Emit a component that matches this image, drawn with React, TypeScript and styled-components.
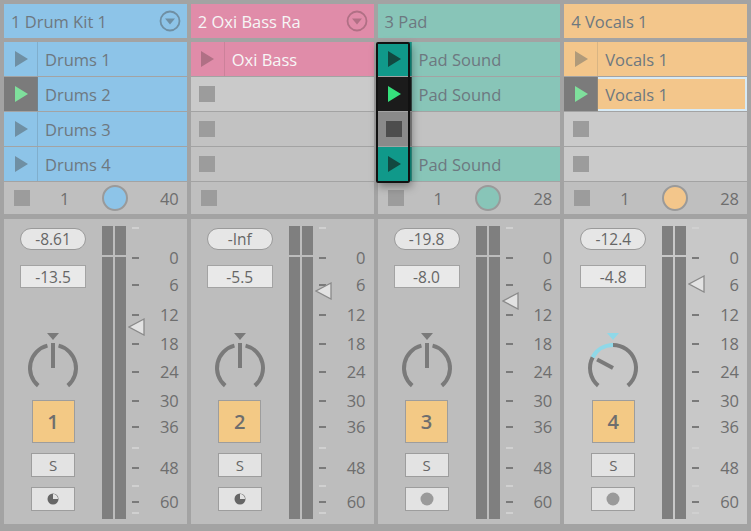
import React from 'react';
import styled, { createGlobalStyle } from 'styled-components';

const GlobalStyle = createGlobalStyle`
  body { margin: 0; background: #a3a3a3; font-family: 'Open Sans', 'Liberation Sans', sans-serif; }
`;

type Clip = { name?: string; play?: 'idle' | 'playing' | 'launch' | 'stop' | 'launchPlay'; selected?: boolean; filled: boolean };

interface Track {
  name: string;
  color: string;
  dark: string;
  arrow: boolean;
  clips: Clip[];
  footer: boolean;
  pill: string;
  vol: string;
  fader: number;
  num: string;
  knob: number;
  bottomDot: 'clock' | 'dot';
  light?: boolean;
}

const tracks: Track[] = [
  {
    name: '1 Drum Kit 1', color: '#8dc4e8', dark: '#6f8fa3', arrow: true, footer: true,
    clips: [
      { name: 'Drums 1', filled: true, play: 'idle' },
      { name: 'Drums 2', filled: true, play: 'playing' },
      { name: 'Drums 3', filled: true, play: 'idle' },
      { name: 'Drums 4', filled: true, play: 'idle' },
    ],
    pill: '-8.61', vol: '-13.5', fader: 101, num: '1', knob: 0, bottomDot: 'clock',
  },
  {
    name: '2 Oxi Bass Ra', color: '#e08ca9', dark: '#b07085', arrow: true, footer: false,
    clips: [
      { name: 'Oxi Bass', filled: true, play: 'idle' },
      { filled: false }, { filled: false }, { filled: false },
    ],
    pill: '-Inf', vol: '-5.5', fader: 65, num: '2', knob: 0, bottomDot: 'clock',
  },
  {
    name: '3 Pad', color: '#88c5b8', dark: '#6a9a90', arrow: false, footer: true,
    clips: [
      { name: 'Pad Sound', filled: true, play: 'launch' },
      { name: 'Pad Sound', filled: true, play: 'launchPlay' },
      { filled: false, play: 'stop' },
      { name: 'Pad Sound', filled: true, play: 'launch' },
    ],
    pill: '-19.8', vol: '-8.0', fader: 75, num: '3', knob: 0, bottomDot: 'dot',
  },
  {
    name: '4 Vocals 1', color: '#f3c68b', dark: '#b09a7a', arrow: false, footer: true, light: true,
    clips: [
      { name: 'Vocals 1', filled: true, play: 'idle' },
      { name: 'Vocals 1', filled: true, play: 'playing', selected: true },
      { filled: false }, { filled: false },
    ],
    pill: '-12.4', vol: '-4.8', fader: 58, num: '4', knob: -62, bottomDot: 'dot',
  },
];

const Page = styled.div`
  width: 751px;
  height: 531px;
  box-sizing: border-box;
  padding: 4px 4px 7px;
  display: grid;
  grid-template-columns: repeat(4, 1fr);
  column-gap: 4px;
  color: #6e6e6e;
`;

const Column = styled.div`
  display: flex;
  flex-direction: column;
  min-width: 0;
`;

const Header = styled.div<{ $bg: string }>`
  height: 34px;
  background: ${p => p.$bg};
  display: flex;
  align-items: center;
  justify-content: space-between;
  padding: 0 6px 0 7px;
  font-size: 16.5px;
  color: ${p => (p.$bg === '#e08ca9' ? '#f6f6f6' : '#6d7880')};
  margin-bottom: 4px;
  box-sizing: border-box;
  white-space: nowrap;
`;

const Clips = styled.div`
  display: flex;
  flex-direction: column;
  gap: 1px;
  margin-bottom: 1px;
`;

const ClipRow = styled.div<{ $bg: string; $sel?: boolean }>`
  height: 34px;
  display: flex;
  background: ${p => p.$bg};
  box-sizing: border-box;
  position: relative;
  ${p => (p.$sel ? 'box-shadow: inset 0 0 0 2px #d7eaf5;' : '')}
`;

const PlayCell = styled.div<{ $bg: string; $line: string }>`
  width: 33px;
  flex-shrink: 0;
  display: flex;
  align-items: center;
  justify-content: center;
  background: ${p => p.$bg};
  border-right: 1px solid ${p => p.$line};
  position: relative;
  z-index: 1;
`;

const ClipName = styled.div<{ $light: boolean }>`
  padding-left: 7px;
  display: flex;
  align-items: center;
  font-size: 16.5px;
  color: ${p => (p.$light ? '#f7f7f7' : '#6d7880')};
  white-space: nowrap;
`;

const LaunchFrame = styled.div`
  position: absolute;
  left: -2px;
  top: 0;
  width: 34px;
  height: 141px;
  border: 2px solid #111;
  border-radius: 2px;
  box-shadow: 2px 4px 8px rgba(0, 0, 0, 0.35);
  pointer-events: none;
  z-index: 2;
  box-sizing: border-box;
`;

const StopSquare = styled.div<{ $c?: string }>`
  width: 16px;
  height: 16px;
  background: ${p => p.$c || '#9c9c9c'};
`;

const Footer = styled.div`
  height: 32px;
  background: #bfbfbf;
  display: flex;
  align-items: center;
  padding: 0 8px 0 10px;
  font-size: 16.5px;
  color: #6e6e6e;
  margin-bottom: 5px;
`;

const FooterNums = styled.div`
  flex: 1;
  display: flex;
  align-items: center;
  justify-content: space-between;
  padding-left: 30px;
`;

const Dot = styled.div<{ $c: string }>`
  width: 22px;
  height: 22px;
  border-radius: 50%;
  background: ${p => p.$c};
  border: 2px solid #9a9a9a;
`;

const Mixer = styled.div<{ $light?: boolean }>`
  flex: 1;
  background: ${p => (p.$light ? '#c8c8c8' : '#bdbdbd')};
  display: grid;
  grid-template-columns: 98px 24px 1fr;
  padding: 7px 8px 5px 0;
`;

const Controls = styled.div`
  display: flex;
  flex-direction: column;
  align-items: center;
  padding-top: 2px;
`;

const Pill = styled.div`
  width: 64px;
  height: 20px;
  border: 1.5px solid #9a9a9a;
  border-radius: 11px;
  background: #e6e6e6;
  font-size: 15.5px;
  display: flex;
  align-items: center;
  justify-content: center;
  color: #666;
`;

const VolBox = styled.div`
  margin-top: 15px;
  width: 66px;
  height: 23px;
  border: 1.5px solid #a3a3a3;
  background: #e9e9e9;
  font-size: 15.5px;
  display: flex;
  align-items: center;
  justify-content: center;
  color: #666;
  box-sizing: border-box;
`;

const KnobWrap = styled.div`
  margin-top: 44px;
  width: 58px;
  height: 60px;
`;

const TrackNum = styled.div`
  margin-top: 8px;
  width: 41px;
  height: 41px;
  background: #f3c985;
  border: 1.5px solid #9d9d9d;
  display: flex;
  align-items: center;
  justify-content: center;
  font-size: 20px;
  font-weight: 600;
  color: #6e6e6e;
`;

const SmallBtn = styled.div`
  margin-top: 10px;
  width: 42px;
  height: 22px;
  border: 1.5px solid #9d9d9d;
  background: #e3e3e3;
  display: flex;
  align-items: center;
  justify-content: center;
  font-size: 15px;
  color: #666;
`;

const Meter = styled.div`
  display: grid;
  grid-template-columns: 1fr 1fr;
  column-gap: 2px;
  grid-template-rows: 29px 1fr;
  row-gap: 2px;
`;

const MeterSeg = styled.div`
  background: #7f7f7f;
`;

const Scale = styled.div`
  position: relative;
`;

const Tick = styled.div<{ $y: number; $minor?: boolean }>`
  position: absolute;
  left: 6px;
  top: ${p => p.$y}px;
  width: 7px;
  height: 1.5px;
  background: ${p => (p.$minor ? '#d0d0d0' : '#7a7a7a')};
`;

const Label = styled.div<{ $y: number }>`
  position: absolute;
  right: 0;
  top: ${p => p.$y - 11}px;
  font-size: 16.5px;
  color: #6e6e6e;
`;

const FaderArrow = styled.svg<{ $y: number }>`
  position: absolute;
  left: 2px;
  top: ${p => p.$y - 9}px;
`;

const marks = [
  { l: '0', y: 31 }, { l: '6', y: 58 }, { l: '12', y: 88 }, { l: '18', y: 117 },
  { l: '24', y: 145 }, { l: '30', y: 174 }, { l: '36', y: 200 }, { l: '48', y: 241 }, { l: '60', y: 275 },
];
const minors = [1, 221, 259, 286];

const Triangle = ({ c }: { c: string }) => (
  <svg width="14" height="16" viewBox="0 0 14 16"><path d="M1 0 L14 8 L1 16 Z" fill={c} /></svg>
);

const Knob = ({ angle }: { angle: number }) => {
  const cx = 29, cy = 36, r = 23;
  const pt = (deg: number, rad = r) => {
    const a = ((deg - 90) * Math.PI) / 180;
    return [cx + rad * Math.cos(a), cy + rad * Math.sin(a)];
  };
  const [sx, sy] = pt(-140);
  const [ex, ey] = pt(140);
  const [gx1, gy1] = pt(-14);
  const [gx2, gy2] = pt(14);
  const [lx, ly] = pt(angle, 18);
  const [ax, ay] = pt(angle);
  const active = angle !== 0;
  return (
    <svg width="58" height="60" viewBox="0 0 58 60">
      <path d="M23 1 L35 1 L29 8 Z" fill={active ? '#8fd8e8' : '#7a7a7a'} />
      <path d={`M${sx} ${sy} A${r} ${r} 0 0 1 ${active ? ax : gx1} ${active ? ay : gy1}`} fill="none" stroke="#7a7a7a" strokeWidth="4" />
      {active && <path d={`M${ax} ${ay} A${r} ${r} 0 0 1 ${cx} ${cy - r}`} fill="none" stroke="#8fd8e8" strokeWidth="4" />}
      <path d={`M${active ? cx : gx2} ${active ? cy - r : gy2} A${r} ${r} 0 0 1 ${ex} ${ey}`} fill="none" stroke="#7a7a7a" strokeWidth="4" />
      <line x1={cx} y1={cy} x2={active ? lx : cx} y2={active ? ly : cy - 25} stroke="#7a7a7a" strokeWidth="4" />
    </svg>
  );
};

const playCellFor = (t: Track, c: Clip) => {
  switch (c.play) {
    case 'playing': return { bg: '#7b7b7b', icon: <Triangle c="#7fe09c" /> };
    case 'launch': return { bg: '#10998a', icon: <Triangle c="#124840" /> };
    case 'launchPlay': return { bg: '#1b1b1b', icon: <Triangle c="#35e07c" /> };
    case 'stop': return { bg: '#8a8a8a', icon: <StopSquare $c="#4d4d4d" /> };
    case 'idle': return { bg: t.color, icon: <Triangle c={t.dark} /> };
    default: return null;
  }
};

const App: React.FC = () => (
  <>
    <GlobalStyle />
    <Page>
      {tracks.map((t, ti) => (
        <Column key={t.name}>
          <Header $bg={t.color}>
            <span>{t.name}</span>
            {t.arrow && (
              <svg width="22" height="22" viewBox="0 0 22 22">
                <circle cx="11" cy="11" r="9.5" fill="none" stroke={t.dark} strokeWidth="1.8" />
                <path d="M6 8.5 L16 8.5 L11 14.5 Z" fill={t.dark} />
              </svg>
            )}
          </Header>
          <Clips style={{ position: 'relative' }}>
            {ti === 2 && <LaunchFrame />}
            {t.clips.map((c, i) => {
              const cell = playCellFor(t, c);
              const rowBg = c.filled ? t.color : (i === 1 || t.light ? '#cacaca' : '#c2c2c2');
              return (
                <ClipRow key={i} $bg={rowBg} $sel={c.selected}>
                  {cell ? (
                    <PlayCell $bg={cell.bg} $line={c.filled ? t.dark + '66' : 'transparent'}>{cell.icon}</PlayCell>
                  ) : (
                    <PlayCell $bg="transparent" $line="transparent"><StopSquare /></PlayCell>
                  )}
                  {c.name && <ClipName $light={t.color === '#e08ca9'}>{c.name}</ClipName>}
                </ClipRow>
              );
            })}
          </Clips>
          <Footer>
            <StopSquare />
            {t.footer && (
              <FooterNums>
                <span>1</span>
                <Dot $c={t.color} />
                <span>{ti === 0 ? '40' : '28'}</span>
              </FooterNums>
            )}
          </Footer>
          <Mixer $light={t.light}>
            <Controls>
              <Pill>{t.pill}</Pill>
              <VolBox>{t.vol}</VolBox>
              <KnobWrap><Knob angle={t.knob} /></KnobWrap>
              <TrackNum>{t.num}</TrackNum>
              <SmallBtn>S</SmallBtn>
              <SmallBtn>
                {t.bottomDot === 'clock' ? (
                  <svg width="12" height="12" viewBox="0 0 12 12">
                    <circle cx="6" cy="6" r="5.5" fill="#666" />
                    <path d="M6 6 L6 1 A5 5 0 0 1 11 6 Z" fill="#e3e3e3" />
                  </svg>
                ) : (
                  <svg width="14" height="14" viewBox="0 0 14 14"><circle cx="7" cy="7" r="6.5" fill="#9a9a9a" /></svg>
                )}
              </SmallBtn>
            </Controls>
            <Meter>
              <MeterSeg /><MeterSeg /><MeterSeg /><MeterSeg />
            </Meter>
            <Scale>
              {marks.map(m => (
                <React.Fragment key={m.l}>
                  <Tick $y={m.y} />
                  <Label $y={m.y}>{m.l}</Label>
                </React.Fragment>
              ))}
              {minors.map(y => <Tick key={y} $y={y} $minor />)}
              <FaderArrow $y={t.fader} width="17" height="18" viewBox="0 0 17 18">
                <path d="M16 1 L1 9 L16 17 Z" fill="#e2e2e2" stroke="#8a8a8a" strokeWidth="1.3" />
              </FaderArrow>
            </Scale>
          </Mixer>
        </Column>
      ))}
    </Page>
  </>
);

export default App;
